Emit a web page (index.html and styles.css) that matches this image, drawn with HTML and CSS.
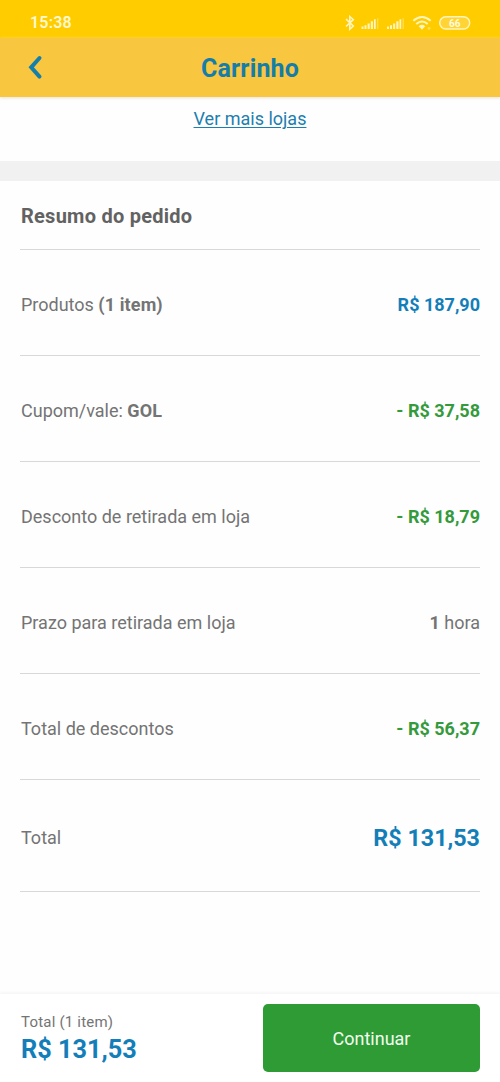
FILE: index.html
```html
<!DOCTYPE html>
<html lang="pt-BR">
<head>
<meta charset="utf-8">
<title>Carrinho</title>
<link rel="stylesheet" href="styles.css">
</head>
<body>
<div class="screen">
  <div class="status">
    <span class="clock">15:38</span>
    <svg class="status-icons" width="128" height="18" viewBox="0 0 128 18" fill="none">
      <path class="stroke" d="M1 5.2L8.300 12L4.800 15.200V2.500L8.300 5.700L1 12.500"/>
      <g id="signal" class="solid"><path d="M16.500 12.500h2V15h-2zM19.500 11.300h2V15h-2zM22.600 9.500h2.100V15h-2.100zM25.800 7.300h2.200V15h-2.200zM29 5.200h1.700V15H29z"/><path class="faint" d="M32 4.200h1.400V15H32z"/></g>
      <use href="#signal" x="25.500"/>
      <path class="stroke wifi" d="M68.300 6.800Q77 -.8 85.700 6.800M71.300 9.900Q77 5 82.700 9.900"/>
      <path class="solid" d="M73.700 12.200Q77 9.400 80.300 12.200L77 15.700z"/>
      <circle class="faint" cx="84" cy="14.300" r="1.500"/>
      <rect class="pill" x="94.700" y="2.700" width="30" height="12.300" rx="6.150"/>
      <text class="level" x="109.700" y="12.600">66</text>
    </svg>
  </div>
  <header class="header">
    <svg class="back" width="16" height="26" viewBox="0 0 16 26"><path d="M12.500 3L4.200 12.300L12.500 21.600"/></svg>
    <h1 class="title">Carrinho</h1>
  </header>
  <main class="content">
    <div class="stores"><a class="link">Ver mais lojas</a></div>
    <div class="separator"></div>
    <section class="summary">
      <h2 class="heading">Resumo do pedido</h2>
      <div class="row"><span class="label">Produtos <b>(1 item)</b></span><b class="blue">R$ 187,90</b></div>
      <div class="row"><span class="label">Cupom/vale: <b>GOL</b></span><b class="green">- R$ 37,58</b></div>
      <div class="row"><span class="label">Desconto de retirada em loja</span><b class="green">- R$ 18,79</b></div>
      <div class="row"><span class="label">Prazo para retirada em loja</span><span><b>1</b> hora</span></div>
      <div class="row"><span class="label">Total de descontos</span><b class="green">- R$ 56,37</b></div>
      <div class="row row-total"><span class="label">Total</span><b class="total">R$ 131,53</b></div>
    </section>
  </main>
  <footer class="footer">
    <div class="amount"><span class="caption">Total (1 item)</span><b class="footer-total">R$ 131,53</b></div>
    <button class="continue">Continuar</button>
  </footer>
</div>
</body>
</html>
```
FILE: styles.css
```css
* { box-sizing: border-box; }
body { margin: 0; background: #fefefe; color: #747474; font: 18px/22px Roboto, sans-serif; }
.screen { height: 1082px; display: flex; flex-direction: column; overflow: hidden; }
.status { height: 38px; flex: none; background: #ffcc00; display: flex; justify-content: space-between; padding: 14px 27px 0 30px; }
.clock { color: #fff8d0; font-size: 16px; line-height: 18px; font-weight: 600; letter-spacing: .2px; }
.status-icons { overflow: visible; }
.stroke { stroke: #fff5bd; stroke-width: 1.6; }
.wifi { stroke-width: 2; }
.solid { fill: #fff5bd; }
.faint { fill: #fff5bd; opacity: .4; }
.pill { stroke: #fff5bd; stroke-width: 1.5; fill: #ffd434; }
.level { fill: #fffbe0; font: 700 10px Roboto, sans-serif; text-anchor: middle; }
.header { height: 59px; flex: none; background: #f8c63f; display: grid; grid-template-columns: 60px 1fr 60px; align-items: center; box-shadow: 0 1px 3px #eadfda; }
.back { margin-left: 27px; fill: none; stroke: #157fac; stroke-width: 4; stroke-linecap: round; }
.title { margin: 2px 0 0; font-size: 25px; line-height: 30px; font-weight: 700; letter-spacing: .15px; text-align: center; color: #147daa; }
.content { flex: 1; }
.stores { height: 64px; padding-top: 11px; text-align: center; }
.link { color: #1c7faf; text-decoration: underline; text-decoration-thickness: 1px; text-underline-offset: 2px; }
.separator { height: 20px; background: #f1f1f1; }
.summary { padding: 0 20px; }
.heading { height: 69px; margin: 0; padding: 23px 0 0 1px; border-bottom: 1px solid #d8d8d8; font-size: 20px; line-height: 24px; letter-spacing: .25px; color: #626262; }
.row { height: 106px; padding-top: 5px; border-bottom: 1px solid #d8d8d8; display: flex; align-items: center; justify-content: space-between; }
.label { padding-left: 1px; }
.row b { font-weight: 700; }
.label b { letter-spacing: .1px; }
.row .blue, .row .total, .footer-total { color: #147eb9; }
.row .green { color: #349a3b; }
.row-total { height: 112px; }
.row .total { font-size: 23.3px; }
.footer { height: 88px; flex: none; display: flex; justify-content: space-between; padding: 10px 20px; background: #fff; box-shadow: 0 -1px 3px #f2f2f2; }
.amount { display: flex; flex-direction: column; padding: 9px 0 0 1px; }
.caption { font-size: 15px; line-height: 18px; letter-spacing: .2px; }
.footer-total { font-size: 25.3px; line-height: 32px; margin-top: 3px; }
.continue { width: 217px; height: 68px; padding: 2px 0 0; border: 0; border-radius: 5px; background: #2e9b34; color: #f3fff1; font: 18px/22px Roboto, sans-serif; }
```
